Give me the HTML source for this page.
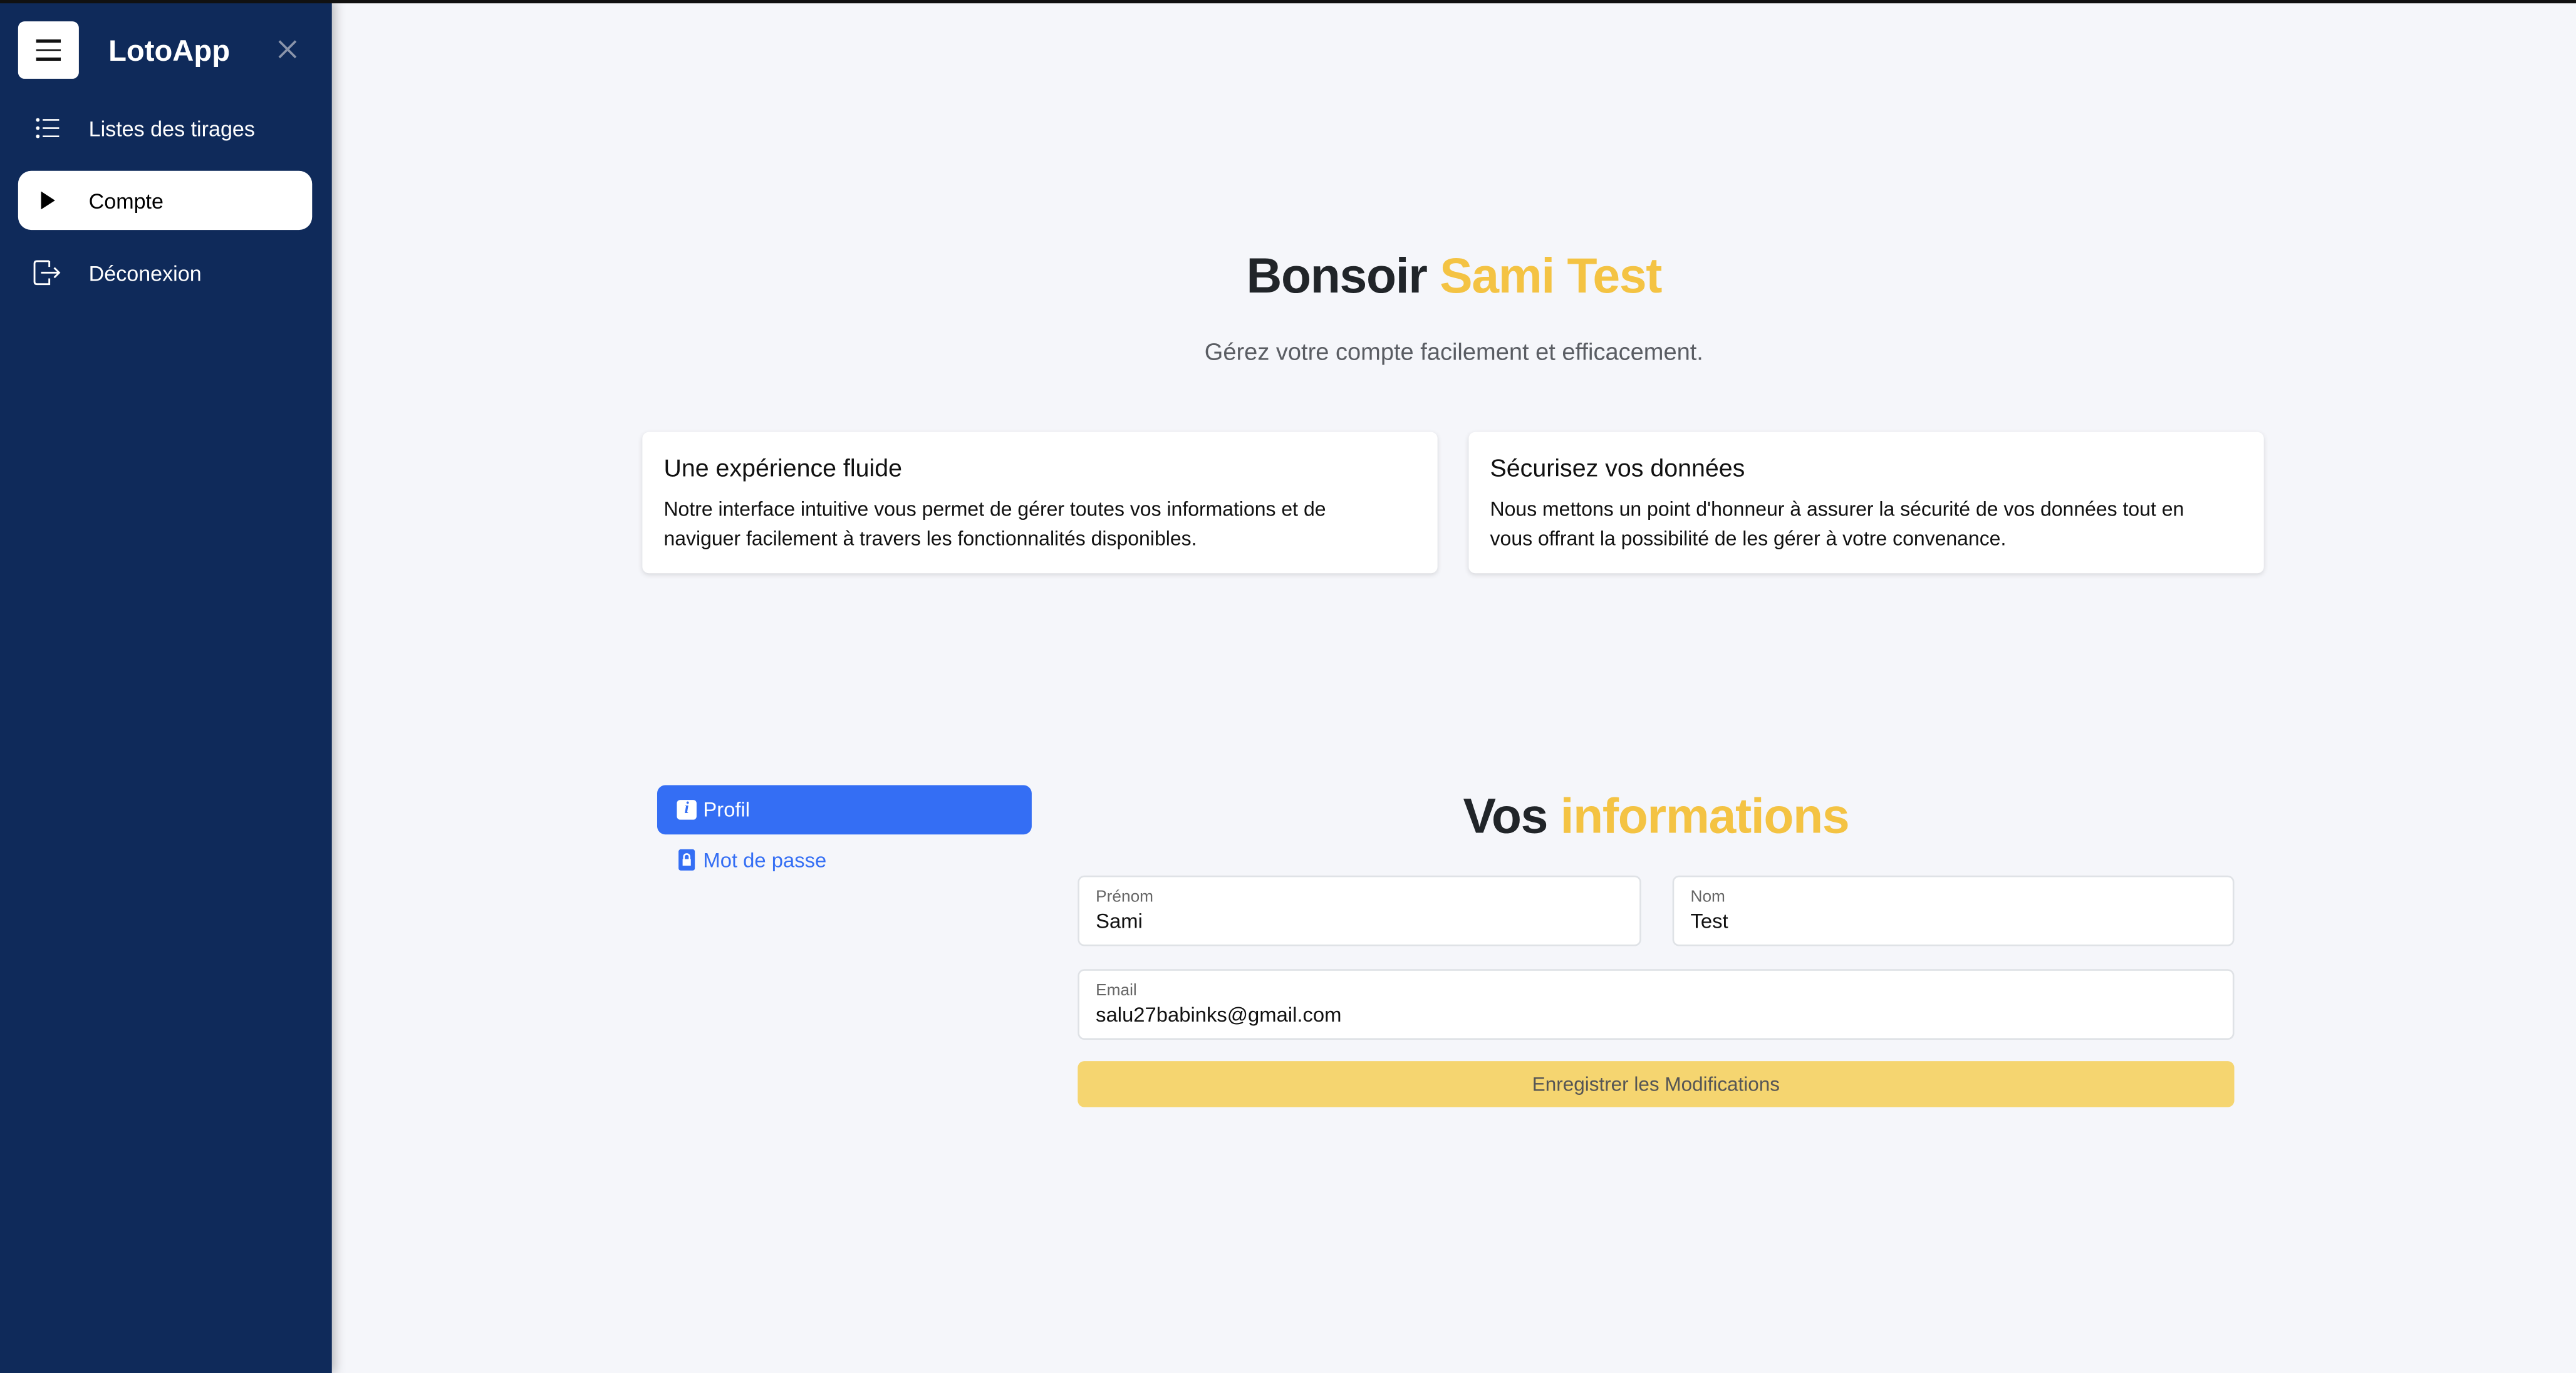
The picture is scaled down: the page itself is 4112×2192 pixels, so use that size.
<!DOCTYPE html>
<html><head><meta charset="utf-8"><style>
html,body{margin:0;padding:0;width:4112px;height:2192px;overflow:hidden;background:#f5f6fa;}
#w{position:absolute;left:0;top:0;width:1568px;height:836px;transform:scale(2.622449);transform-origin:0 0;font-family:"Liberation Sans",sans-serif;color:#212529;background:#f5f6fa;}
.a{position:absolute;}
.sb{left:0;top:0;width:202px;height:836px;background:#0f2a5a;box-shadow:2px 0 6px rgba(0,0,0,.25);}
.nav{color:#fff;font-size:13px;}
.card{background:#fff;border-radius:4px;box-shadow:0 1px 3px rgba(0,0,0,.12);}
.card h3{margin:0;position:absolute;left:13px;top:14px;font-size:15px;font-weight:normal;color:#111;}
.card p{margin:0;position:absolute;left:13px;top:38px;font-size:12.2px;line-height:18px;color:#111;width:440px;}
.in{background:#fff;border:1px solid #dfe2e6;border-radius:4px;box-sizing:border-box;}
.in .l{position:absolute;left:10px;top:7px;font-size:10px;color:#666;}
.in .v{position:absolute;left:10px;top:20px;font-size:12.5px;color:#111;}
</style></head><body><div id="w">
<div class="a" style="left:0;top:0;width:1568px;height:2px;background:#111;z-index:5"></div>
<div class="a sb">
 <div class="a" style="left:11px;top:13px;width:37px;height:35px;background:#fff;border-radius:4px;">
  <div class="a" style="left:11px;top:11px;width:15px;height:1.5px;background:#111"></div>
  <div class="a" style="left:11px;top:16.5px;width:15px;height:1.5px;background:#111"></div>
  <div class="a" style="left:11px;top:22px;width:15px;height:1.5px;background:#111"></div>
 </div>
 <div class="a" style="left:66px;top:21px;font-size:18px;font-weight:bold;color:#fff">LotoApp</div>
 <svg class="a" style="left:169px;top:24px" width="12" height="12" viewBox="0 0 12 12"><path d="M1 1L11 11M11 1L1 11" stroke="#8a94aa" stroke-width="1.4"/></svg>
 <svg class="a" style="left:21px;top:71px" width="16" height="14" viewBox="0 0 16 14"><g fill="#fff"><circle cx="2" cy="2" r="1.1"/><circle cx="2" cy="7" r="1.1"/><circle cx="2" cy="12" r="1.1"/></g><path d="M5 2H15M5 7H15M5 12H15" stroke="#fff" stroke-width="1"/></svg>
 <div class="a nav" style="left:54px;top:71px">Listes des tirages</div>
 <div class="a" style="left:11px;top:104px;width:179px;height:36px;background:#fff;border-radius:8px"></div>
 <svg class="a" style="left:24px;top:116px" width="10" height="12" viewBox="0 0 10 12"><path d="M1 0.5L9.5 6L1 11.5Z" fill="#000"/></svg>
 <div class="a" style="left:54px;top:115px;font-size:13px;color:#000">Compte</div>
 <svg class="a" style="left:20px;top:158px" width="18" height="16" viewBox="0 0 18 16"><path d="M10 1H2.5Q1 1 1 2.5V13.5Q1 15 2.5 15H10V11.5M10 4.5V1M5 8H16M13 5L16 8L13 11" fill="none" stroke="#fff" stroke-width="1.1"/></svg>
 <div class="a nav" style="left:54px;top:159px">Déconexion</div>
</div>
<div class="a" style="left:202px;top:152px;width:1366px;text-align:center;font-size:30px;font-weight:bold;letter-spacing:-0.5px">Bonsoir <span style="color:#f4c343">Sami Test</span></div>
<div class="a" style="left:202px;top:207px;width:1366px;text-align:center;font-size:14.5px;color:#5a5d63">Gérez votre compte facilement et efficacement.</div>
<div class="a card" style="left:391px;top:263px;width:484px;height:86px"><h3>Une expérience fluide</h3><p>Notre interface intuitive vous permet de gérer toutes vos informations et de naviguer facilement à travers les fonctionnalités disponibles.</p></div>
<div class="a card" style="left:894px;top:263px;width:484px;height:86px"><h3>Sécurisez vos données</h3><p>Nous mettons un point d'honneur à assurer la sécurité de vos données tout en vous offrant la possibilité de les gérer à votre convenance.</p></div>
<div class="a" style="left:400px;top:478px;width:228px;height:30px;background:#346ef4;border-radius:5px"></div>
<div class="a" style="left:412px;top:487px;width:12px;height:12px;background:#fff;border-radius:2px;color:#346ef4;font:italic bold 10px 'Liberation Serif',serif;text-align:center;line-height:12px">i</div>
<div class="a" style="left:428px;top:486px;font-size:12.5px;color:#fff">Profil</div>
<svg class="a" style="left:413px;top:517px" width="10" height="13" viewBox="0 0 10 13"><rect width="10" height="13" rx="1.5" fill="#346ef4"/><rect x="2.5" y="6" width="5" height="4" fill="#fff"/><path d="M3.3 6.5V4.6a1.7 1.7 0 0 1 3.4 0V6.5" stroke="#fff" fill="none" stroke-width="1"/></svg>
<div class="a" style="left:428px;top:517px;font-size:12.5px;color:#346ef4">Mot de passe</div>
<div class="a" style="left:656px;top:481px;width:704px;text-align:center;font-size:30px;font-weight:bold;letter-spacing:-0.5px">Vos <span style="color:#f4c343">informations</span></div>
<div class="a in" style="left:656px;top:533px;width:343px;height:43px"><span class="a l">Prénom</span><span class="a v">Sami</span></div>
<div class="a in" style="left:1018px;top:533px;width:342px;height:43px"><span class="a l">Nom</span><span class="a v">Test</span></div>
<div class="a in" style="left:656px;top:590px;width:704px;height:43px"><span class="a l">Email</span><span class="a v">salu27babinks@gmail.com</span></div>
<div class="a" style="left:656px;top:646px;width:704px;height:28px;background:#f5d570;border-radius:4px;text-align:center;line-height:28px;font-size:12px;color:#555">Enregistrer les Modifications</div>
</div></body></html>
